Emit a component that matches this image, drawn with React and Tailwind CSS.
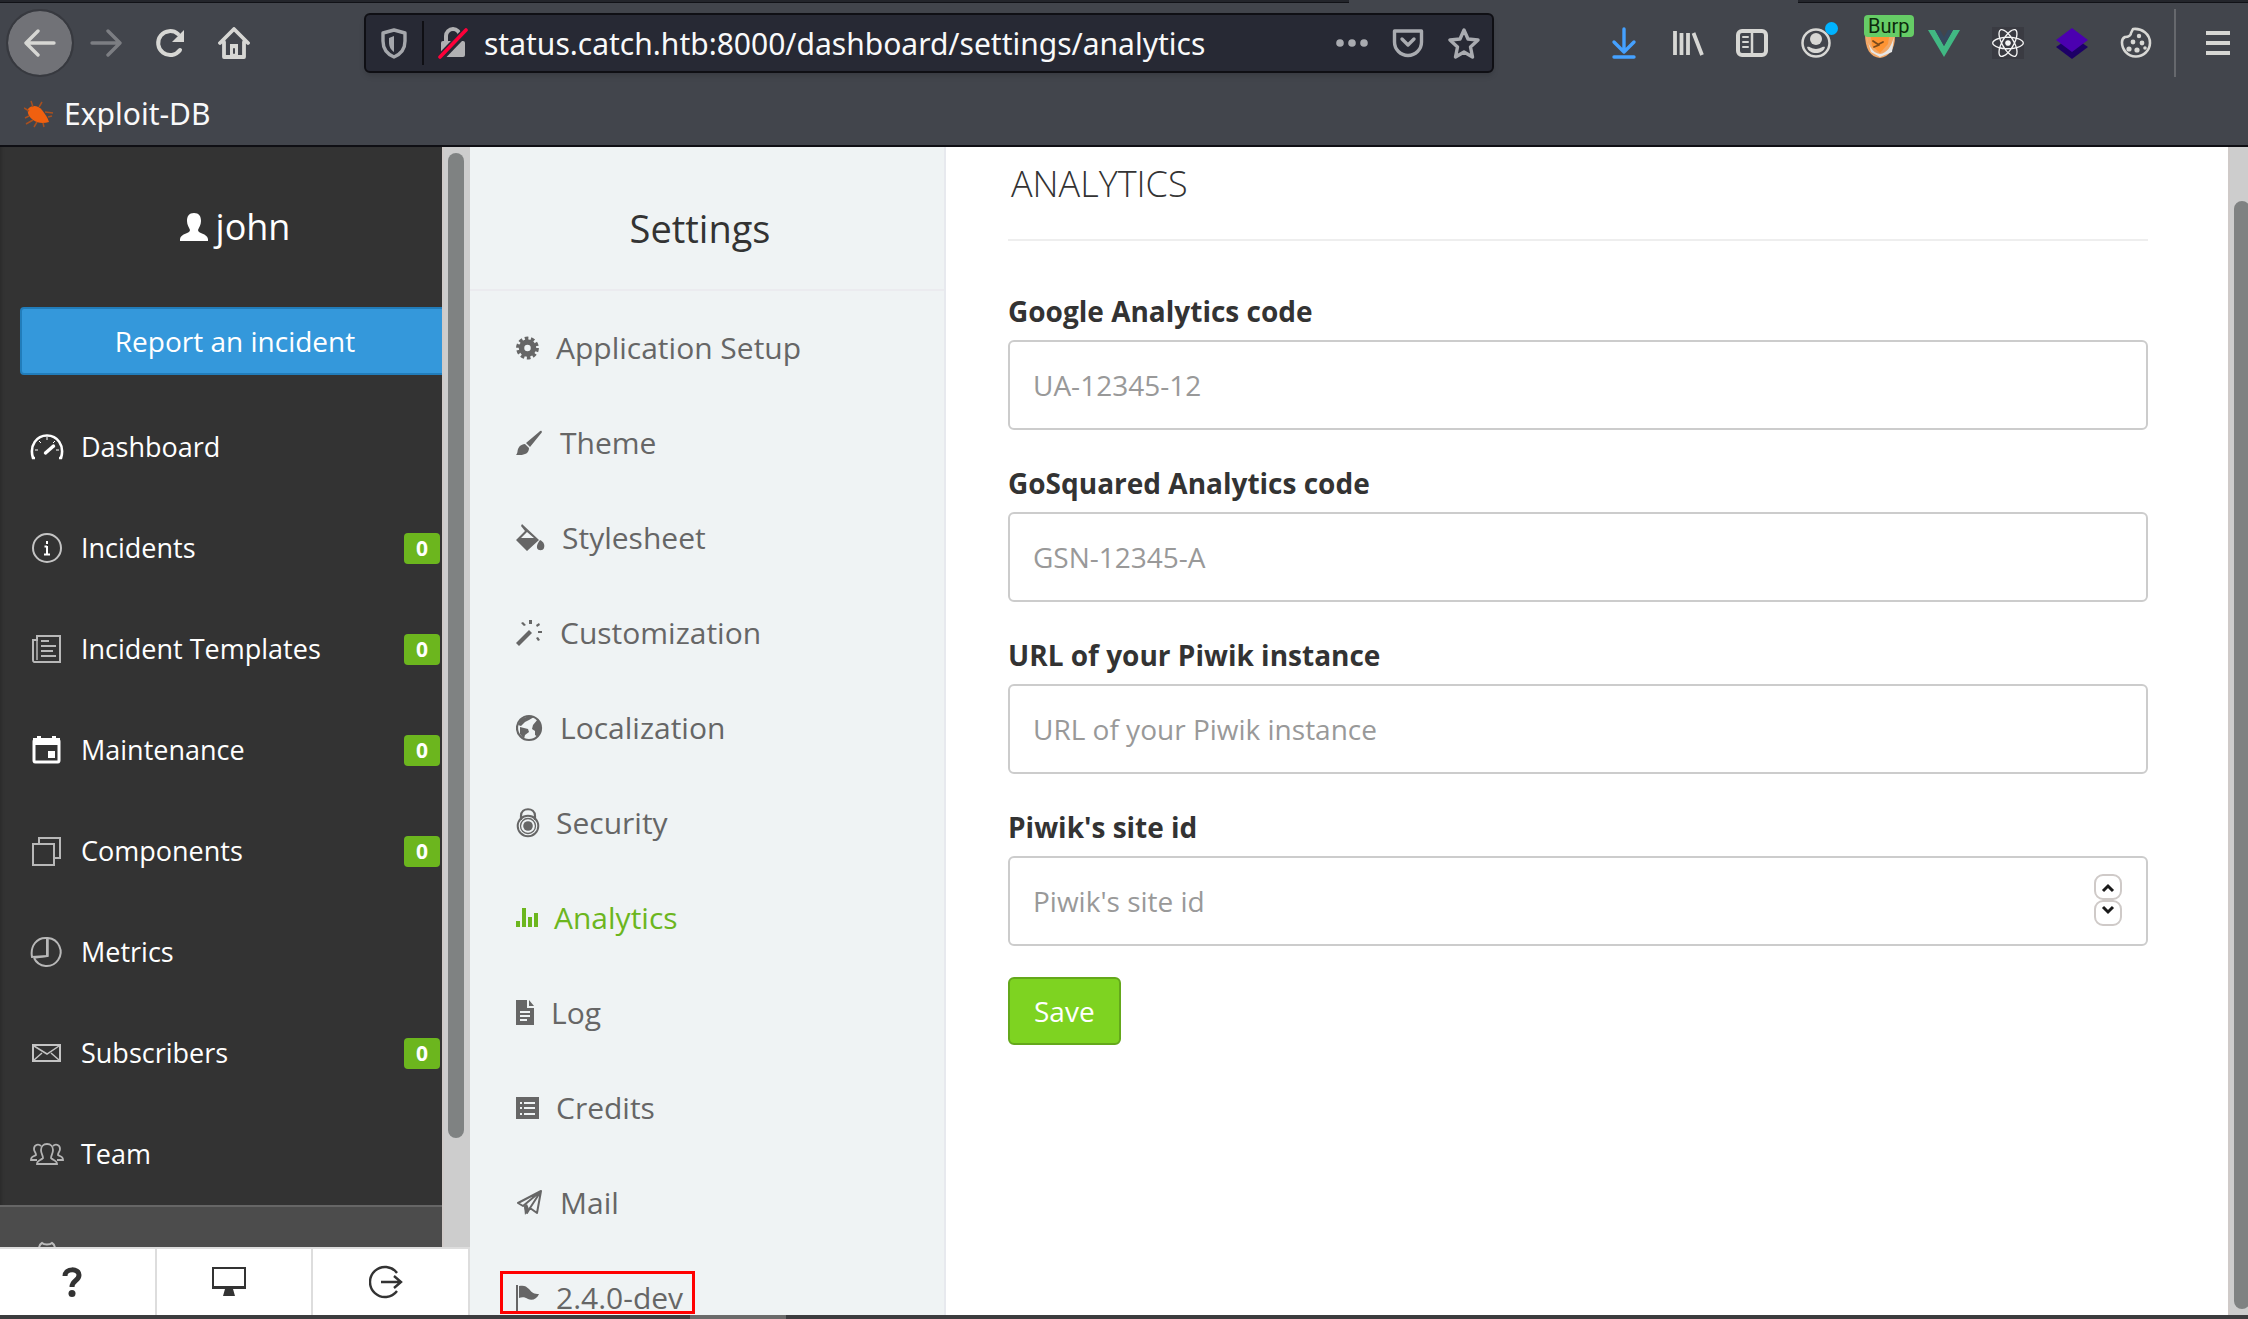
import React from "react";
import { FaReact } from "react-icons/fa";

/* ---------- browser chrome icons ---------- */

const Svg = ({ size = 32, box = "0 0 32 32", children, className = "" }) => (
  <svg width={size} height={size} viewBox={box} className={className} fill="none" stroke="currentColor" strokeWidth="3.4" strokeLinecap="round" strokeLinejoin="round" aria-hidden="true">
    {children}
  </svg>
);

const BackIcon = () => <Svg><path d="M30 16H3M14 4L2 16l12 12" /></Svg>;
const ForwardIcon = () => <Svg><path d="M2 16h27M18 4l12 12-12 12" /></Svg>;
const ReloadIcon = () => (
  <Svg>
    <path d="M26 23A12 12 0 1 1 24 7" strokeWidth="4" />
    <path d="M30 3v12H18z" fill="currentColor" stroke="none" />
  </Svg>
);
const HomeIcon = () => (
  <Svg>
    <path d="M2 16L16 2l14 14M6 15v15h20V15" strokeWidth="3.8" />
    <path d="M12 30V17h8v13z" fill="currentColor" stroke="none" />
    <path d="M16 22v4" stroke="#42454c" strokeWidth="2" />
  </Svg>
);
const ShieldIcon = () => (
  <Svg className="text-[#a5a7ac]">
    <path d="M16 3l11 3v8c0 8-4 13-11 16C9 27 5 22 5 14V6z" />
    <path d="M16 9l-5 2v4c0 5 2 8 5 10z" fill="currentColor" stroke="none" />
  </Svg>
);
const LockIcon = () => (
  <Svg className="text-[#b1b1b3]">
    <path d="M9 14V9a7 7 0 0 1 14 0v5" strokeWidth="4" />
    <rect x="4" y="14" width="24" height="16" rx="2" fill="currentColor" stroke="none" />
    <path d="M4 30L30 3" stroke="#272934" strokeWidth="8" strokeLinecap="butt" />
    <path d="M3 30L29 3" stroke="#ff0039" strokeWidth="3.6" />
  </Svg>
);
const DotsIcon = () => (
  <Svg className="text-[#a9abb0]">
    <g fill="currentColor" stroke="none"><circle cx="4" cy="16" r="3.8" /><circle cx="16" cy="16" r="3.8" /><circle cx="28" cy="16" r="3.8" /></g>
  </Svg>
);
const PocketIcon = () => (
  <Svg className="text-[#a9abb0]">
    <path d="M2.5 4h27v11a13.5 13.5 0 0 1-27 0z" />
    <path d="M10 12l6 6 6-6" />
  </Svg>
);
const StarIcon = () => (
  <Svg className="text-[#a9abb0]"><path d="M16 3l4 9 10 1-7.500 7 2 10L16 25l-8.500 5 2-10L2 13l10-1z" /></Svg>
);
const DownloadIcon = () => <Svg className="text-[#45a1ff]"><path d="M16 2v22M6 15l10 10 10-10M6 30h20" /></Svg>;
const LibraryIcon = () => <Svg><path d="M3 4v24M9.500 6v22M16 6v22M21.500 6L30 28" strokeWidth="3.800" strokeLinecap="butt" /></Svg>;
const SidebarIcon = () => (
  <Svg>
    <rect x="2" y="4" width="28" height="24" rx="4" strokeWidth="4" />
    <path d="M16 4v24" strokeWidth="2.500" />
    <path d="M7 10h5M7 15h5M7 20h5" strokeWidth="2" />
  </Svg>
);
const AccountIcon = () => (
  <Svg>
    <circle cx="16" cy="16" r="13.500" strokeWidth="2.500" />
    <circle cx="16" cy="12" r="6" fill="currentColor" stroke="none" />
    <path d="M7 20c3-1 4 2 9 2s6-3 9-2c-1 4-5 6-9 6s-8-2-9-6z" fill="currentColor" stroke="none" />
  </Svg>
);
const FoxIcon = () => (
  <Svg>
    <path d="M1 6c0 16 5 24 15 25 9-1 15-9 15-21L16 3z" fill="#f2a766" stroke="none" />
    <path d="M2 8c2 9 6 18 14 19 7-1 11-7 14-17l-2 15-12 5-9-5z" fill="#e6e6e6" stroke="none" />
    <path d="M6 4h20l-2 13-8 9-8-7z" fill="#ff9433" stroke="none" />
    <path d="M9 14l6 4-5 2M15 17l4-2" stroke="#7a4a1c" strokeWidth="1.800" />
  </Svg>
);
const VueIcon = () => (
  <Svg>
    <path d="M0 3h7l9 16 9-16h7L16 30z" fill="#41b883" stroke="none" />
    <path d="M7 3h5l4 7 4-7h5l-9 16z" fill="#35495e" stroke="none" />
  </Svg>
);
const LayersIcon = () => (
  <Svg>
    <path d="M16 9l16 11-16 12L0 20z" fill="#1d0066" stroke="none" />
    <path d="M16 1l16 12-16 12L0 13z" fill="#4b00b0" stroke="none" />
  </Svg>
);
const CookieIcon = () => (
  <Svg>
    <path d="M13 2c9-1 17 5 17 14a14 14 0 1 1-28-1c0-3 1-4 3-5 4 0 6-2 6-4z" strokeWidth="2.600" />
    <g fill="currentColor" stroke="none"><circle cx="19" cy="9" r="2.200" /><circle cx="13" cy="15" r="2.400" /><circle cx="22" cy="16" r="2.400" /><circle cx="9" cy="22" r="2.600" /><circle cx="17" cy="23" r="2.600" /><circle cx="25" cy="21" r="1.800" /></g>
  </Svg>
);
const MenuIcon = () => <Svg><path d="M4 6h24M4 16h24M4 26h24" strokeWidth="4" strokeLinecap="butt" /></Svg>;

const BugIcon = () => (
  <svg width="30" height="28" viewBox="0 0 30 28" aria-hidden="true">
    <path d="M4 9c3-4 10-4 14 1 3 4 6 8 7 12-6 2-12 1-16-2C5 17 3 13 4 9z" fill="#f0600f" />
    <path d="M9 7L7 1M15 7l3-5M21 12l8 1M24 17l4-1M5 11L0 8M5 16l-4 2M9 20l-7 4M13 22l-3 5M19 23l1 4" stroke="#a8501f" strokeWidth="1.500" fill="none" />
  </svg>
);

/* ---------- page icons ---------- */

const Nav = ({ children, sw = 2 }) => (
  <svg width="34" height="34" viewBox="0 0 34 34" fill="none" stroke="currentColor" strokeWidth={sw} aria-hidden="true">{children}</svg>
);

const navItems = [
  {
    label: "Dashboard",
    icon: (
      <Nav sw={2.6}>
        <path d="M5 27H3C-1 14 7 4.500 17 4.500S35 14 31 27h-2" />
        <path d="M15.500 22l8-7" strokeWidth="3.400" strokeLinecap="round" />
        <path d="M5 19h3M29 19h-3M9 10l2 2M17 6v3M25 10l-2 2" strokeWidth="1" />
      </Nav>
    ),
  },
  {
    label: "Incidents",
    badge: "0",
    icon: (
      <Nav>
        <circle cx="17" cy="16" r="14" stroke="#c4c4c4" />
        <path d="M17 9v3M17 14v9M14.500 14.500H17M14 22.500h6" />
      </Nav>
    ),
  },
  {
    label: "Incident Templates",
    badge: "0",
    icon: (
      <Nav>
        <g stroke="#b8b8b8"><path d="M7 3h23v26H4a2 2 0 0 1-1-2V7h4z" /><path d="M7 7v20" strokeWidth="1.500" /><path d="M11 8h8M11 13h15M11 18h12M11 23h15" /></g>
      </Nav>
    ),
  },
  {
    label: "Maintenance",
    badge: "0",
    icon: (
      <Nav sw={3}>
        <rect x="4" y="6" width="25" height="22" rx="1.500" />
        <path d="M3 4h27v7H3zM7 2h4v4H7zM22 2h4v4h-4zM18 17h7v7h-7z" fill="currentColor" stroke="none" />
      </Nav>
    ),
  },
  {
    label: "Components",
    badge: "0",
    icon: (
      <Nav><g stroke="#b8b8b8"><path d="M3 9h21v21H3z" /><path d="M9 9V3h21v20h-6" /></g></Nav>
    ),
  },
  {
    label: "Metrics",
    icon: (
      <Nav><g stroke="#b8b8b8"><path d="M4 22a14 14 0 1 0 14-20" /><path d="M17 20V2C7 1 0 10 2 21z" /><path d="M18 2v18L4 22" strokeWidth="1.500" /></g></Nav>
    ),
  },
  {
    label: "Subscribers",
    badge: "0",
    icon: (
      <Nav><g stroke="#c4c4c4"><path d="M3 8h27v16H3z" /><path d="M4 9l13 8L29 9M4 23l8-7M29 23l-8-7" strokeWidth="1.500" /></g></Nav>
    ),
  },
  {
    label: "Team",
    icon: (
      <Nav sw={1.8}>
        <g stroke="#b4b4b4">
          <path d="M7 26h20c0-4-3-3-6-6 0-3 2-4 2-8 0-3-2-6-6-6s-6 3-6 6c0 4 2 5 2 8-3 3-6 2-6 6z" />
          <path d="M7 22H1c0-4 2-3 5-5 0-3-2-3-2-6 0-5 5-5 7-3M27 22h6c0-4-2-3-5-5 0-3 2-3 2-6 0-5-5-5-7-3" />
        </g>
      </Nav>
    ),
  },
];

/* glyphs keep their own widths, so labels start where each glyph ends */
const Glyph = ({ w, children }) => (
  <svg width={w} height="30" viewBox={`0 0 ${w} 30`} fill="currentColor" className="shrink-0" aria-hidden="true">{children}</svg>
);

const settingsItems = [
  {
    label: "Application Setup",
    w: 24,
    g: (
      <>
        <circle cx="11.500" cy="15" r="6" fill="none" stroke="currentColor" strokeWidth="5.500" />
        <circle cx="11.500" cy="15" r="9.700" fill="none" stroke="currentColor" strokeWidth="3.400" strokeDasharray="3.600 2.500" />
      </>
    ),
  },
  {
    label: "Theme",
    w: 28,
    g: (
      <>
        <path d="M25.500 3c1 1 0 2-1 3L14 19l-4-4L23 4c1-1 2-1.500 2.500-1z" />
        <path d="M9 16l4 4c0 5-4 7-9 7H0c2-2 1-4 2.500-7S7 16 9 16z" />
      </>
    ),
  },
  {
    label: "Stylesheet",
    w: 30,
    g: (
      <>
        <path fillRule="evenodd" d="M6 1l17 16-12 11L0 17l9-9-4-5zM11 9l-6 6h13z" />
        <path d="M24 17c4 2 5 5 4 8-1 3-6 3-7 0-.500-3 1-5 3-8z" />
      </>
    ),
  },
  {
    label: "Customization",
    w: 28,
    g: (
      <>
        <path d="M0 25L13 12l3 3L3 28z" />
        <path d="M13 2h3v4h-3zM5 5l2-1 3 3-2 1zM20 7l3-2 1 2-3 2zM22 13h4v2h-4zM20 20l2-1 2 3-2 1z" />
      </>
    ),
  },
  {
    label: "Localization",
    w: 28,
    g: (
      <>
        <circle cx="13" cy="15" r="12" fill="none" stroke="currentColor" strokeWidth="2.200" />
        <path d="M2 12L5 6l8-3 5 1-5 3-4 2-4 4zM4 14l8 2 1 3-4 3-1 4-4-5z" />
        <path d="M17 12l5-6 3 6v6l-3 6-3-2v-4l-3-2z" />
      </>
    ),
  },
  {
    label: "Security",
    w: 24,
    g: (
      <>
        <path d="M5 12V8c0-9 14-9 14 0v4" fill="none" stroke="currentColor" strokeWidth="2.200" />
        <circle cx="12" cy="18" r="10.300" fill="none" stroke="currentColor" strokeWidth="2" />
        <circle cx="12" cy="18" r="7.500" fill="none" stroke="currentColor" strokeWidth="1.300" />
        <circle cx="12" cy="18" r="4.800" />
      </>
    ),
  },
  { label: "Analytics", w: 22, active: true, g: <path d="M0 18h4v6H0zM6 5h4v19H6zM12 14h4v10h-4zM18 10h4v14h-4z" /> },
  {
    label: "Log",
    w: 19,
    g: (
      <path fillRule="evenodd" d="M0 2h11v8h7v17H0zM13 2l5 6h-5zM4 13v2h10v-2zM4 17v2h10v-2zM4 21v2h7v-2z" />
    ),
  },
  {
    label: "Credits",
    w: 24,
    g: (
      <path fillRule="evenodd" d="M0 4h23v22H0zM4 9v2h2V9zM8 9v2h11V9zM4 14v2h2v-2zM8 14v2h11v-2zM4 20v2h2v-2zM8 20v2h11v-2z" />
    ),
  },
  {
    label: "Mail",
    w: 28,
    g: (
      <>
        <path d="M25 3L2 15l5 3L25 3l-4 22-7-5L25 3M14 20l-3 5-2-6" fill="none" stroke="currentColor" strokeWidth="2" strokeLinejoin="round" />
        <path d="M8 18l3-2 2 5-4 6z" />
      </>
    ),
  },
  {
    label: "2.4.0-dev",
    w: 24,
    boxed: true,
    g: (
      <>
        <path d="M0 2h2v27H0z" />
        <path d="M3 3c5-1 7 0 10 3 3 4 5 5 10 5-2 5-7 7-11 5-3-2-6-2-9-1z" />
      </>
    ),
  },
];

const fields = [
  { id: "ga", label: "Google Analytics code", placeholder: "UA-12345-12", type: "text" },
  { id: "gs", label: "GoSquared Analytics code", placeholder: "GSN-12345-A", type: "text" },
  { id: "piwik-url", label: "URL of your Piwik instance", placeholder: "URL of your Piwik instance", type: "text" },
  { id: "piwik-id", label: "Piwik's site id", placeholder: "Piwik's site id", type: "number" },
];

function IconButton({ label, children }) {
  return (
    <button aria-label={label} className="relative flex h-16 w-16 shrink-0 items-center justify-center">
      {children}
    </button>
  );
}

function BrowserBar() {
  return (
    <header className="shrink-0 border-b-2 border-[#0f0f14] bg-[#42454c] font-['Noto_Sans',sans-serif] text-[#d7d7d4]">
      <div className="flex h-[3px] justify-between">
        <div className="w-3/5 border-b border-[#111217] bg-[#23252b]" />
        <div className="w-1/5 border-b border-[#111217] bg-[#23252b]" />
      </div>
      <div className="flex h-20 items-center pl-2">
        <button aria-label="Back" className="flex h-16 w-16 shrink-0 items-center justify-center rounded-full bg-[#717277] outline-2 outline-[#37393f]">
          <BackIcon />
        </button>
        <div className="ml-0.5 flex text-[#7c7e83]"><IconButton label="Forward"><ForwardIcon /></IconButton></div>
        <IconButton label="Reload"><ReloadIcon /></IconButton>
        <IconButton label="Home"><HomeIcon /></IconButton>
        <div className="ml-[98px] flex h-[60px] min-w-0 flex-1 items-center rounded-md border-2 border-[#0f0f14] bg-[#272934] shadow-md">
          <span className="ml-3 flex"><ShieldIcon /></span>
          <span className="mr-[13px] ml-3 h-11 w-0.5 bg-[#0f0f14]" />
          <LockIcon />
          <input
            aria-label="Address"
            defaultValue="status.catch.htb:8000/dashboard/settings/analytics"
            className="ml-[15px] min-w-0 flex-1 bg-transparent pt-0.5 text-[30px] leading-[44px] text-[#f9f9fa] outline-none"
          />
          <span className="mr-3 flex gap-6"><DotsIcon /><PocketIcon /><StarIcon /></span>
        </div>
        <div className="ml-[98px] flex items-center">
          <IconButton label="Downloads"><DownloadIcon /></IconButton>
          <IconButton label="Library"><LibraryIcon /></IconButton>
          <IconButton label="Sidebars"><SidebarIcon /></IconButton>
          <IconButton label="Account">
            <AccountIcon />
            <span className="absolute top-[11px] right-2.5 h-[13px] w-[13px] rounded-full bg-[#00b3ff]" />
          </IconButton>
          <IconButton label="Burp proxy">
            <FoxIcon />
            <span className="absolute top-1 left-4 h-[22px] rounded-sm bg-[#66cc66] px-1 font-[Roboto,sans-serif] text-xl leading-[22px] text-[#0c2a0c]">Burp</span>
          </IconButton>
          <IconButton label="Vue devtools"><VueIcon /></IconButton>
          <IconButton label="React devtools">
            <span className="flex bg-[#3a3b42]"><FaReact size={32} color="#f4f4f4" /></span>
          </IconButton>
          <IconButton label="Wappalyzer"><LayersIcon /></IconButton>
          <IconButton label="Cookies"><CookieIcon /></IconButton>
          <span className="ml-1.5 h-[68px] w-0.5 bg-[#66686d]" />
          <div className="mr-[-2px] ml-2.5 flex"><IconButton label="Menu"><MenuIcon /></IconButton></div>
        </div>
      </div>
      <div className="flex h-[62px] items-center pl-6">
        <a href="#exploit-db" className="flex items-center gap-2.5 text-[30px] leading-10 text-[#f9f9fa]">
          <BugIcon />Exploit-DB
        </a>
      </div>
    </header>
  );
}

function Sidebar() {
  return (
    <aside className="flex w-[470px] shrink-0 flex-col">
      <div className="flex min-h-0 flex-1">
        <div className="min-w-0 flex-1 overflow-hidden bg-[#333333] text-white shadow-[inset_4px_0_3px_-2px_rgba(0,0,0,0.15)]">
          <div className="flex h-40 items-center justify-center gap-2 pl-7 text-[36px]">
            <svg width="28" height="28" viewBox="0 0 28 28" fill="currentColor" aria-hidden="true">
              <path d="M14 0c5 0 7 3 7 8 0 4-2 6-3 9 0 4 9 3 10 9v2H0v-2c1-6 10-5 10-9C9 14 7 12 7 8c0-5 2-8 7-8z" />
            </svg>
            <span>john</span>
          </div>
          <div className="flex pl-5">
            <button className="h-[68px] w-[430px] shrink-0 rounded border-2 border-[#217dbb] bg-[#3498db] text-[28px]">Report an incident</button>
          </div>
          <nav className="pt-[22px]">
            {navItems.map((n) => (
              <a key={n.label} href="#nav" className="flex h-[101px] items-center pr-0.5 pl-[30px] text-[27px]">
                {n.icon}
                <span className="ml-[17px]">{n.label}</span>
                {n.badge && (
                  <span className="ml-auto flex h-[31px] w-9 items-center justify-center rounded bg-[#6cb61e] text-[21px] font-bold">{n.badge}</span>
                )}
              </a>
            ))}
          </nav>
          <div className="flex border-t-2 border-[#666666] bg-[#4c4c4c] pt-[34px] pl-[30px]">
            <Nav><path d="M9 8c0-3 1-5 3-6 2 2 8 2 10 0 2 1 3 3 3 6 0 12-16 12-16 0z" stroke="#bcbcbc" /></Nav>
          </div>
        </div>
        <div className="w-7 border-l-2 border-[#cfcac8] bg-[#cdcdcd] pt-1.5 pl-1">
          <div className="h-[90%] w-4 rounded-full bg-[#7f8282]" />
        </div>
      </div>
      <div className="grid h-[68px] shrink-0 grid-cols-3 border-t-2 border-[#dddddd] bg-white text-[#333333]">
        <button aria-label="Help" className="flex items-center justify-center border-r-2 border-[#dddddd] pr-2.5">
          <svg width="20" height="30" viewBox="0 0 20 30" fill="none" stroke="currentColor" strokeWidth="5" aria-hidden="true">
            <path d="M3 9c0-8 14-8 14-1 0 6-7 5-7 12" />
            <circle cx="10" cy="26.500" r="3.500" fill="currentColor" stroke="none" />
          </svg>
        </button>
        <button aria-label="Status page" className="flex items-center justify-center border-r-2 border-[#dddddd] pr-2.5">
          <svg width="34" height="30" viewBox="0 0 34 30" fill="none" stroke="currentColor" strokeWidth="2" aria-hidden="true">
            <path d="M1 1h32v20H1zM1 20h32" />
            <path d="M13 22h8l2 7H11z" fill="currentColor" stroke="none" />
          </svg>
        </button>
        <button aria-label="Logout" className="flex items-center justify-center border-r-2 border-[#dddddd] pr-2.5">
          <svg width="34" height="34" viewBox="0 0 34 34" fill="none" stroke="currentColor" strokeWidth="2.400" aria-hidden="true">
            <path d="M28 8a15 15 0 1 0 0 18M12 17h20M25 11l7 6-7 6" />
          </svg>
        </button>
      </div>
    </aside>
  );
}

function SettingsMenu() {
  return (
    <aside className="flex w-[476px] shrink-0 flex-col overflow-hidden border-r-2 border-[#e7e9ee] bg-[#eff3f4]">
      <h1 className="border-b-2 border-[#ebebef] pt-[54px] pr-[30px] pb-[34px] pl-4 text-center text-[38px] leading-[54px] text-[#333333]">Settings</h1>
      <nav className="pt-[9px]">
        {settingsItems.map((s) => (
          <a
            key={s.label}
            href="#settings"
            className={`relative flex h-[95px] items-center gap-4 pl-[46px] text-[30px] leading-none ${s.active ? "text-[#6cb61e]" : "text-[#666666]"}`}
          >
            <Glyph w={s.w}>{s.g}</Glyph>
            {s.label}
            {s.boxed && <span className="absolute top-[21px] left-[30px] h-[43px] w-[195px] border-[3px] border-[#ff0000]" />}
          </a>
        ))}
      </nav>
    </aside>
  );
}

function Spinner() {
  return (
    <span className="absolute top-[18px] right-[26px] flex flex-col">
      {["M2 9l5-5 5 5", "M2 3l5 5 5-5"].map((d, i) => (
        <button key={d} type="button" aria-label={i ? "Decrease" : "Increase"} className={`flex h-[26px] w-7 justify-center rounded-[9px] border-2 border-[#cfcac8] bg-white ${i ? "items-start pt-0.5" : "items-end pb-1"}`}>
          <svg width="14" height="12" viewBox="0 0 14 12" fill="none" stroke="#1a1a1a" strokeWidth="3" aria-hidden="true"><path d={d} /></svg>
        </button>
      ))}
    </span>
  );
}

function AnalyticsForm() {
  return (
    <main className="min-w-0 flex-1 overflow-hidden bg-white pr-20 pl-[62px] text-[#333333]">
      <h2 className="border-b-2 border-[#eeeeee] pt-2.5 pb-7 pl-[3px] text-[36px] leading-[54px] font-light">ANALYTICS</h2>
      <form className="pt-[50px]" onSubmit={(e) => e.preventDefault()}>
        <div className="flex flex-col gap-[33px]">
          {fields.map((f) => (
            <div key={f.id} className="flex flex-col gap-[9px]">
              <label htmlFor={f.id} className="text-[28px] leading-10 font-bold">{f.label}</label>
              <div className="relative">
                <input
                  id={f.id}
                  type={f.type}
                  placeholder={f.placeholder}
                  className="block h-[90px] w-full rounded-md border-2 border-[#cccccc] bg-white px-[23px] text-[28px] outline-none [appearance:textfield] placeholder:text-[#999999]"
                />
                {f.type === "number" && <Spinner />}
              </div>
            </div>
          ))}
        </div>
        <button type="submit" className="mt-[31px] h-[68px] rounded-md border-2 border-[#64a81b] bg-[#7ed321] px-6 text-[28px] text-white">Save</button>
      </form>
    </main>
  );
}

export default function App() {
  return (
    <div className="flex h-screen flex-col overflow-hidden bg-white font-['Open_Sans',sans-serif]">
      <BrowserBar />
      <div className="flex min-h-0 flex-1">
        <Sidebar />
        <SettingsMenu />
        <AnalyticsForm />
        <div className="w-5 shrink-0 overflow-hidden border-l-2 border-[#cfcac8] bg-[#cdcdcd] pt-[54px] pb-1.5 pl-1">
          <div className="h-full w-4 rounded-full bg-[#7f8282]" />
        </div>
      </div>
      <div className="flex h-1 shrink-0 bg-[#3c3c3e] pl-[690px]">
        <div className="w-24 bg-[#6a6a6a]" />
      </div>
    </div>
  );
}
